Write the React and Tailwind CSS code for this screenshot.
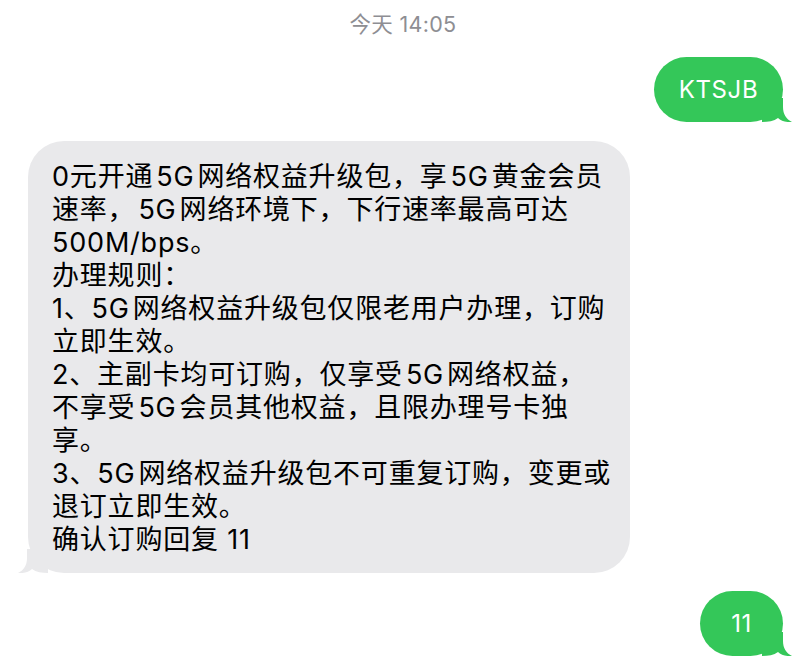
import React from 'react'

const font = { fontFamily: 'Inter, "Noto Sans CJK SC", sans-serif' }

// latin runs get a little breathing room, like iOS auto-spacing
function L({ children }) {
  return <span className="px-[3px]">{children}</span>
}

function Tail({ color, side }) {
  const pos = side === 'right' ? 'right-[-9px]' : 'left-[-10px] -scale-x-100'
  return (
    <svg
      className={`absolute bottom-0 ${pos}`}
      width="30"
      height="24"
      viewBox="0 0 30 24"
    >
      <path
        d="M21 0 L21 9 C21 16 24 21 30 24 C24 24.5 19 23 16 20 C12 23 6 24 0 24 L0 0 Z"
        fill={color}
      />
    </svg>
  )
}

function Outgoing({ children, className = '' }) {
  return (
    <div className="flex justify-end pr-[23px]">
      <div
        className={`relative flex h-[65px] items-center justify-center rounded-[33px] bg-[#34c759] text-[24px] tracking-[0.6px] text-white ${className}`}
      >
        <span className="relative z-10">{children}</span>
        <Tail color="#34c759" side="right" />
      </div>
    </div>
  )
}

const lines = [
  <>0元开通<L>5G</L>网络权益升级包，享<L>5G</L>黄金会员</>,
  <>速率，<L>5G</L>网络环境下，下行速率最高可达</>,
  <>500M/bps。</>,
  <>办理规则：</>,
  <>1、5G<span className="pl-[3px]">网络权益升级包仅限老用户办理，订购</span></>,
  <>立即生效。</>,
  <>2、主副卡均可订购，仅享受<L>5G</L>网络权益，</>,
  <>不享受<L>5G</L>会员其他权益，且限办理号卡独</>,
  <>享。</>,
  <>3、5G<span className="pl-[3px]">网络权益升级包不可重复订购，变更或</span></>,
  <>退订立即生效。</>,
  <>确认订购回复 11</>,
]

export default function App() {
  return (
    <div className="min-h-screen w-[806px] bg-white" style={font}>
      <div className="flex h-[46px] items-center justify-center pt-[2px] text-[21.5px] tracking-[0.3px] text-[#8e8e93]">
        今天 14:05
      </div>

      <div className="mt-[11px]">
        <Outgoing className="w-[129px]">KTSJB</Outgoing>
      </div>

      <div className="mt-[19px] flex pl-[28px]">
        <div className="relative w-[602px] rounded-[36px] bg-[#e9e9eb] pb-[17px] pl-[24px] pr-[20px] pt-[19px] text-[27px] leading-[33px] tracking-[0.8px] text-black">
          <div className="relative z-10">
            {lines.map((l, i) => (
              <div key={i} className="whitespace-nowrap">
                {l}
              </div>
            ))}
          </div>
          <Tail color="#e9e9eb" side="left" />
        </div>
      </div>

      <div className="mt-[18px] pb-[17px]">
        <Outgoing className="w-[83px]">11</Outgoing>
      </div>
    </div>
  )
}
